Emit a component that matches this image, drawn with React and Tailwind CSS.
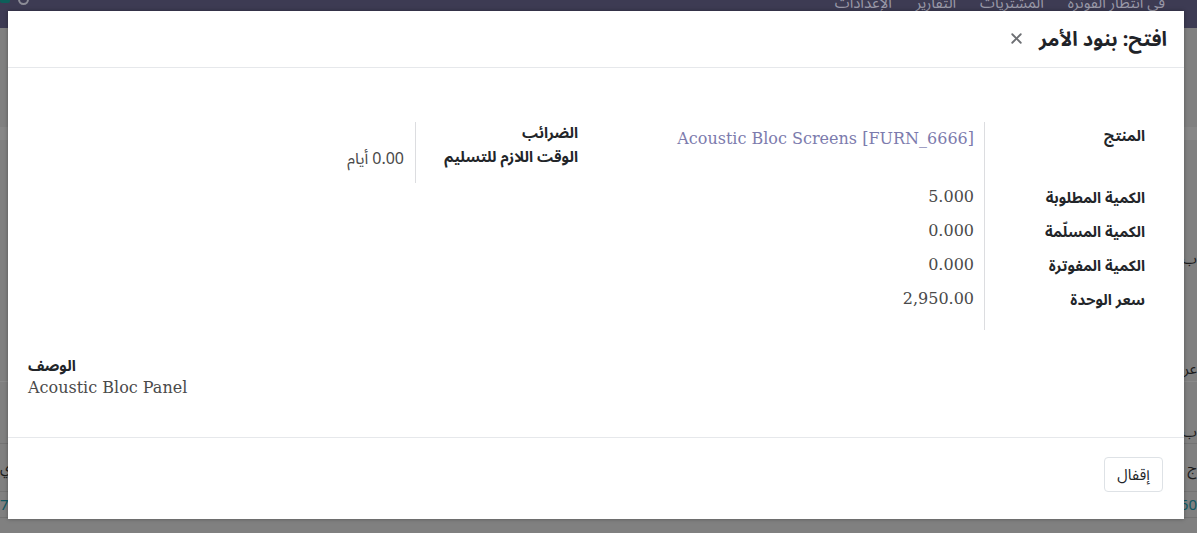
import { X } from 'lucide-react'

const arabic = { fontFamily: '"Noto Sans", "Noto Sans Arabic", "DejaVu Sans", sans-serif' }
const serif = { fontFamily: '"DejaVu Serif", serif' }

const rightRows = [
  { label: 'الكمية المطلوبة', value: '5.000' },
  { label: 'الكمية المسلّمة', value: '0.000' },
  { label: 'الكمية المفوترة', value: '0.000' },
  { label: 'سعر الوحدة', value: '2,950.00' },
]

function EdgeRow({ left, right, className = '', tone = 'text-[#1c1c1c]' }) {
  return (
    <div className={`flex shrink-0 items-center justify-between overflow-hidden text-[15px] ${tone} ${className}`} style={arabic}>
      <span>{left}</span>
      <span>{right}</span>
    </div>
  )
}

function Backdrop() {
  return (
    <div className="flex h-full w-full flex-col bg-[#808080]">
      <div className="flex h-[28px] shrink-0 items-start bg-[#3d3b53]">
        <span className="h-[3px] w-[10px] rounded-b-[2px] bg-[#0d5f5a]" />
        <span className="-mt-[6px] ml-[8px] h-[11px] w-[11px] rounded-full border-2 border-[#8c8c96]" />
        <div dir="rtl" className="-mt-[8px] mr-[32px] ml-auto flex gap-[24px] text-[15px] leading-[20px] text-[#9a99a8]" style={arabic}>
          <span>في انتظار الفوترة</span>
          <span>المشتريات</span>
          <span>التقارير</span>
          <span>الإعدادات</span>
        </div>
      </div>
      <div className="h-[99px] shrink-0" />
      <div className="h-[13px] shrink-0 bg-[#878787]" />
      <div className="h-[105px] shrink-0" />
      <EdgeRow className="h-[26px]" right="ب" />
      <div className="h-[84px] shrink-0" />
      <EdgeRow className="h-[26px]" right="عر" />
      <div className="h-[39px] shrink-0 border-t border-[#8a8a8a]" />
      <EdgeRow className="h-[24px] border-b border-[#737373]" right="ب" />
      <EdgeRow className="h-[48px] border-b border-[#737373]" left="ي" right="ج" />
      <EdgeRow className="h-[26px] border-b border-[#737373]" tone="text-[#0f5962]" left="75" right="60" />
      <div className="flex h-[28px] shrink-0 items-center text-[15px] leading-[28px] text-[#0f5962]" style={serif}>
        <span className="w-[165px] shrink-0 pt-[14px]">73.00</span>
        <span className="w-[125px] shrink-0 pt-[14px]">150.00</span>
        <span className="w-[120px] shrink-0 pt-[14px]">0.000</span>
        <span className="w-[200px] shrink-0 pt-[14px]">0.000</span>
        <span className="w-[105px] shrink-0 pt-[14px]">1.000</span>
        <span className="w-[220px] shrink-0 pt-[14px]">Floor Cart Sofa</span>
        <span className="shrink-0 pt-[14px]">Floor Cart Sofa [FURN_8888]</span>
      </div>
    </div>
  )
}

function Modal() {
  return (
    <div dir="rtl" className="absolute left-[8px] top-[11px] flex h-[508px] w-[1176px] flex-col bg-white shadow-[0_0_4px_rgba(0,0,0,0.35)]" style={arabic}>
      <header className="flex h-[57px] shrink-0 items-center gap-[14px] border-b border-[#e6e8eb] pr-[17px]">
        <h4 className="text-[20px] font-bold leading-none text-[#1f2328]">افتح: بنود الأمر</h4>
        <X size={17} strokeWidth={2.6} className="mt-[-2px] text-[#6d6f73]" />
      </header>

      <div className="flex h-[369px] shrink-0 flex-col pt-[54px] pr-[39px]">
        <div className="flex">
          <div className="flex w-[567px] shrink-0">
            <div className="-mt-[2px] flex w-[160px] shrink-0 flex-col text-[15px] font-bold text-[#222529]">
              <div className="h-[60px] leading-[30px]">المنتج</div>
              {rightRows.map((r) => (
                <div key={r.label} className="h-[34px] leading-[34px]">{r.label}</div>
              ))}
            </div>
            <div className="flex flex-1 flex-col border-r border-[#dcdde0] pb-[14px] pr-[10px] text-[16px] text-[#4a4a4a]" style={serif}>
              <div className="h-[58px] leading-[34px]">
                <span dir="ltr" className="text-[#7c7bad]">Acoustic Bloc Screens [FURN_6666]</span>
              </div>
              {rightRows.map((r) => (
                <div key={r.label} className="h-[34px] leading-[34px]"><span dir="ltr">{r.value}</span></div>
              ))}
            </div>
          </div>
          <div className="flex shrink-0 items-start">
            <div className="-mt-[2px] flex w-[162px] shrink-0 flex-col text-[15px] font-bold leading-[24px] text-[#222529]">
              <div>الضرائب</div>
              <div>الوقت اللازم للتسليم</div>
            </div>
            <div className="flex h-[61px] flex-col border-r border-[#dcdde0] pr-[11px] text-[16px] leading-[24px] text-[#4a4a4a]">
              <div className="h-[24px]" />
              <div className="flex gap-[4px]">
                <span>0.00</span>
                <span>أيام</span>
              </div>
            </div>
          </div>
        </div>

        <div dir="ltr" className="mt-[23px] pl-[20px] text-left">
          <div className="text-[15px] font-bold leading-[24px] text-[#222529]" style={arabic}>الوصف</div>
          <div className="text-[16px] leading-[22px] text-[#4a4a4a]" style={serif}>Acoustic Bloc Panel</div>
        </div>
      </div>

      <footer className="flex h-[82px] shrink-0 items-start border-t border-[#e6e8eb] pr-[21px] pt-[19px]">
        <button className="h-[35px] w-[59px] rounded-[4px] border border-[#dee2e6] bg-white text-[15px] text-[#212529]">إقفال</button>
      </footer>
    </div>
  )
}

export default function App() {
  return (
    <div className="relative h-[533px] w-[1197px] overflow-hidden">
      <Backdrop />
      <Modal />
    </div>
  )
}
